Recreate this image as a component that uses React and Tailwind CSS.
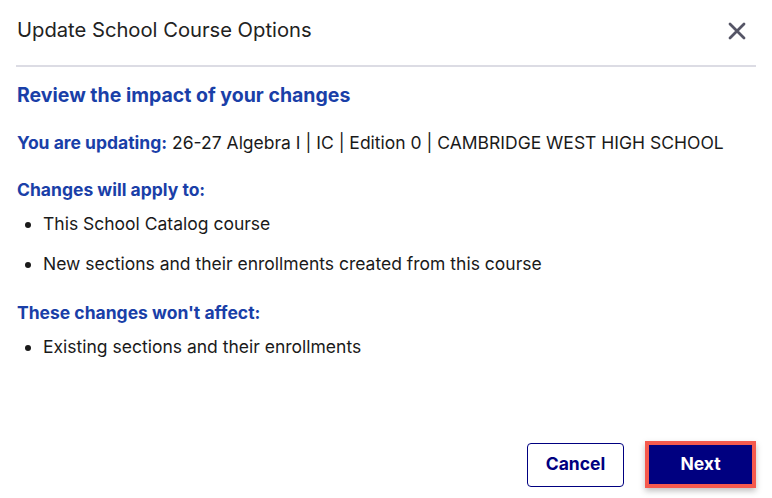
import React from 'react';

const App = () => {
  return (
    <div className="w-[772px] h-[498px] bg-white flex flex-col font-[Inter,sans-serif] text-[#1a1a1a]">
      <div className="flex items-center justify-between pl-[17px] pr-[24px] h-[60px] pt-[1px]">
        <h1 className="text-[20.2px] text-[#222]">Update School Course Options</h1>
        <button className="w-[22px] h-[22px] flex items-center justify-center">
          <svg width="18" height="18" viewBox="0 0 18 18" fill="none" stroke="#555566" strokeWidth="2.8" strokeLinecap="round">
            <path d="M2 2L16 16M16 2L2 16" />
          </svg>
        </button>
      </div>
      <div className="mx-[16px] mt-[5px] h-[2px] bg-[#dcdce4]" />
      <div className="px-[17px] flex flex-col">
        <h2 className="mt-[16px] text-[19.5px] font-bold text-[#1a3fa8] leading-[24px]">Review the impact of your changes</h2>
        <p className="mt-[24px] text-[17.5px] leading-[24px]">
          <span className="font-bold text-[#1a3fa8]">You are updating:</span> 26-27 Algebra I | IC | Edition 0 | CAMBRIDGE WEST HIGH SCHOOL
        </p>
        <h3 className="mt-[23px] text-[17.5px] font-bold text-[#1a3fa8] leading-[24px]">Changes will apply to:</h3>
        <ul className="mt-[10px] list-disc pl-[26px] text-[17.5px] leading-[24px] flex flex-col gap-[16px]">
          <li>This School Catalog course</li>
          <li>New sections and their enrollments created from this course</li>
        </ul>
        <h3 className="mt-[25px] text-[17.5px] font-bold text-[#1a3fa8] leading-[24px]">These changes won't affect:</h3>
        <ul className="mt-[10px] list-disc pl-[26px] text-[17.5px] leading-[24px]">
          <li>Existing sections and their enrollments</li>
        </ul>
      </div>
      <div className="mt-auto flex justify-end items-center gap-[21px] pr-[16px] pb-[10px]">
        <button className="w-[97px] h-[44px] rounded-[4px] border border-[#000080] text-[#000080] font-bold text-[17.5px]">Cancel</button>
        <button className="w-[111px] h-[47px] bg-[#000080] text-white font-bold text-[17.5px] border-[4px] border-[#f55a4e] shadow-[0_3px_6px_rgba(0,0,0,0.25)]">Next</button>
      </div>
    </div>
  );
};

export default App;
